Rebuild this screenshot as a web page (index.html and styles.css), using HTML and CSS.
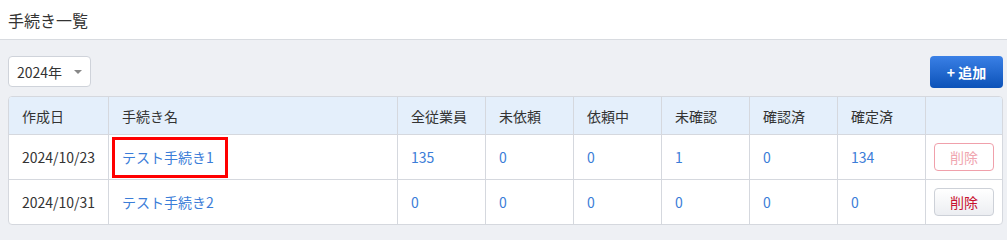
FILE: index.html
```html
<!DOCTYPE html>
<html lang="ja">
<head>
  <meta charset="UTF-8">
  <title>手続き一覧</title>
  <link rel="stylesheet" href="styles.css">
</head>
<body>
  <header class="page-header">
    <h1>手続き一覧</h1>
  </header>

  <main class="content">
    <div class="toolbar">
      <div class="year-select">
        <span>2024年</span>
        <span class="caret"></span>
      </div>
      <button class="add-btn">+ 追加</button>
    </div>

    <div class="table-wrap">
      <table class="proc-table">
        <thead>
          <tr>
            <th class="col-date">作成日</th>
            <th class="col-name">手続き名</th>
            <th class="col-num">全従業員</th>
            <th class="col-num">未依頼</th>
            <th class="col-num">依頼中</th>
            <th class="col-num">未確認</th>
            <th class="col-num">確認済</th>
            <th class="col-num">確定済</th>
            <th class="col-act"></th>
          </tr>
        </thead>
        <tbody>
          <tr>
            <td>2024/10/23</td>
            <td><a href="#" class="link highlight">テスト手続き1</a></td>
            <td><a href="#" class="link">135</a></td>
            <td><a href="#" class="link">0</a></td>
            <td><a href="#" class="link">0</a></td>
            <td><a href="#" class="link">1</a></td>
            <td><a href="#" class="link">0</a></td>
            <td><a href="#" class="link">134</a></td>
            <td class="act"><button class="del-btn" disabled>削除</button></td>
          </tr>
          <tr>
            <td>2024/10/31</td>
            <td><a href="#" class="link">テスト手続き2</a></td>
            <td><a href="#" class="link">0</a></td>
            <td><a href="#" class="link">0</a></td>
            <td><a href="#" class="link">0</a></td>
            <td><a href="#" class="link">0</a></td>
            <td><a href="#" class="link">0</a></td>
            <td><a href="#" class="link">0</a></td>
            <td class="act"><button class="del-btn">削除</button></td>
          </tr>
        </tbody>
      </table>
    </div>
  </main>
</body>
</html>
```

FILE: styles.css
```css
body {
  margin: 0;
  background-color: #eef0f4;
  color: #333;
  font-family: "Noto Sans CJK JP", "Noto Sans", sans-serif;
  font-size: 14px;
}
.page-header {
  height: 40px;
  background-color: #fff;
  border-bottom: 1px solid #d8dbe0;
  box-sizing: border-box;
  display: flex;
  align-items: center;
  padding: 0 8px;
}
.page-header h1 {
  margin: 0;
  font-size: 16px;
  font-weight: normal;
  color: #333;
}
.content {
  padding: 16px 4px 0 8px;
}
.toolbar {
  display: flex;
  justify-content: space-between;
  align-items: flex-start;
  margin-bottom: 8px;
}
.year-select {
  width: 83px;
  height: 31px;
  box-sizing: border-box;
  background-color: #fff;
  border: 1px solid #cfd3da;
  border-radius: 4px;
  display: flex;
  align-items: center;
  justify-content: space-between;
  padding: 0 8px 0 8px;
  font-size: 14px;
  color: #333;
}
.caret {
  width: 0;
  height: 0;
  border-left: 4px solid transparent;
  border-right: 4px solid transparent;
  border-top: 4px solid #888;
}
.add-btn {
  width: 73px;
  height: 32px;
  border: none;
  border-radius: 4px;
  background: linear-gradient(#3a80e6, #0c52b8);
  color: #fff;
  font-family: inherit;
  font-size: 14px;
  font-weight: bold;
  cursor: pointer;
}
.table-wrap {
  background-color: #fff;
  border: 1px solid #d5d8de;
  border-radius: 4px;
  overflow: hidden;
}
.proc-table {
  width: 100%;
  border-collapse: collapse;
  table-layout: fixed;
}
.proc-table th,
.proc-table td {
  text-align: left;
  padding: 0 0 0 13px;
  border-left: 1px solid #d5d8de;
  font-weight: normal;
}
.proc-table th:first-child,
.proc-table td:first-child {
  border-left: none;
}
.proc-table th {
  height: 37px;
  background-color: #e4effb;
  border-bottom: 1px solid #d5d8de;
  color: #333;
}
.proc-table td {
  height: 44px;
  border-bottom: 1px solid #d5d8de;
}
.proc-table tbody tr:last-child td {
  border-bottom: none;
}
.col-date { width: 86px; }
.col-name { width: 275px; }
.col-num { width: 74px; }
.col-act { width: 65px; }
.link {
  color: #3b7dd8;
  text-decoration: none;
}
.highlight {
  display: inline-block;
  line-height: 20px;
  padding: 7px 11px 8px 7px;
  margin: -10px -14px -11px -10px;
  border: 3px solid #f00;
}
.proc-table td.act {
  padding-left: 8px;
}
.del-btn {
  width: 60px;
  height: 28px;
  border: 1px solid #cdd1d8;
  border-radius: 4px;
  background: linear-gradient(#fff, #eceef2);
  color: #c8102e;
  font-family: inherit;
  font-size: 14px;
  cursor: pointer;
}
.del-btn:disabled {
  background: #fff;
  border-color: #f0a0ab;
  color: #f0a6b0;
  cursor: default;
}
```
